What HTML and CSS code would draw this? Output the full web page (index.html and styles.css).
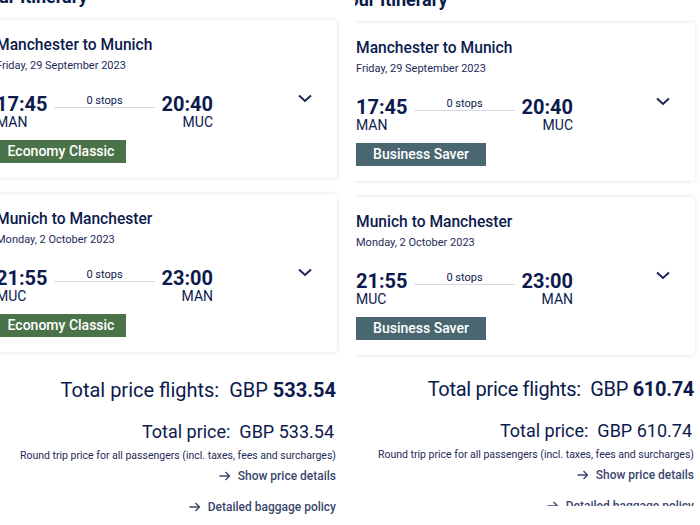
FILE: index.html
```html
<!DOCTYPE html>
<html lang="en">
<head>
<meta charset="utf-8">
<title>Itinerary comparison</title>
<link rel="stylesheet" href="styles.css">
</head>
<body>
<div class="wrap">
  <section class="panel panel-left">
    <div class="sheet">
      <h2 class="heading">Your Itinerary</h2>
      <div class="card">
        <div class="route">Manchester to Munich</div>
        <div class="date">Friday, 29 September 2023</div>
        <div class="row">
          <div class="leg">
            <div class="end">
              <div class="time">17:45</div>
              <div class="code">MAN</div>
            </div>
            <div class="mid"><div class="stops">0 stops</div><div class="line"></div></div>
            <div class="end end-right">
              <div class="time">20:40</div>
              <div class="code">MUC</div>
            </div>
          </div>
          <svg class="chev" width="14" height="9" viewBox="0 0 14 9"><path d="M1 1.5 L7 7 L13 1.5" fill="none" stroke="#1a2656" stroke-width="2"/></svg>
        </div>
        <div class="badge badge-eco">Economy Classic</div>
      </div>
      <div class="card card-second">
        <div class="route">Munich to Manchester</div>
        <div class="date">Monday, 2 October 2023</div>
        <div class="row">
          <div class="leg">
            <div class="end">
              <div class="time">21:55</div>
              <div class="code">MUC</div>
            </div>
            <div class="mid"><div class="stops">0 stops</div><div class="line"></div></div>
            <div class="end end-right">
              <div class="time">23:00</div>
              <div class="code">MAN</div>
            </div>
          </div>
          <svg class="chev" width="14" height="9" viewBox="0 0 14 9"><path d="M1 1.5 L7 7 L13 1.5" fill="none" stroke="#1a2656" stroke-width="2"/></svg>
        </div>
        <div class="badge badge-eco">Economy Classic</div>
      </div>
      <div class="totals">
        <div class="t-flights">Total price flights:&nbsp; GBP <b>533.54</b></div>
        <div class="t-price">Total price:&nbsp; GBP 533.54</div>
        <div class="t-note">Round trip price for all passengers (incl. taxes, fees and surcharges)</div>
        <div class="t-link"><svg class="arrow" width="12" height="10" viewBox="0 0 12 10"><path d="M0.5 5 H10.5 M6.5 1 L10.5 5 L6.5 9" fill="none" stroke="#3b476c" stroke-width="1.4"/></svg>Show price details</div>
        <div class="t-link t-bag"><svg class="arrow" width="12" height="10" viewBox="0 0 12 10"><path d="M0.5 5 H10.5 M6.5 1 L10.5 5 L6.5 9" fill="none" stroke="#3b476c" stroke-width="1.4"/></svg>Detailed baggage policy</div>
      </div>
    </div>
  </section>
  <section class="panel panel-right">
    <div class="sheet">
      <h2 class="heading">Your Itinerary</h2>
      <div class="card">
        <div class="route">Manchester to Munich</div>
        <div class="date">Friday, 29 September 2023</div>
        <div class="row">
          <div class="leg">
            <div class="end">
              <div class="time">17:45</div>
              <div class="code">MAN</div>
            </div>
            <div class="mid"><div class="stops">0 stops</div><div class="line"></div></div>
            <div class="end end-right">
              <div class="time">20:40</div>
              <div class="code">MUC</div>
            </div>
          </div>
          <svg class="chev" width="14" height="9" viewBox="0 0 14 9"><path d="M1 1.5 L7 7 L13 1.5" fill="none" stroke="#1a2656" stroke-width="2"/></svg>
        </div>
        <div class="badge badge-biz">Business Saver</div>
      </div>
      <div class="card card-second">
        <div class="route">Munich to Manchester</div>
        <div class="date">Monday, 2 October 2023</div>
        <div class="row">
          <div class="leg">
            <div class="end">
              <div class="time">21:55</div>
              <div class="code">MUC</div>
            </div>
            <div class="mid"><div class="stops">0 stops</div><div class="line"></div></div>
            <div class="end end-right">
              <div class="time">23:00</div>
              <div class="code">MAN</div>
            </div>
          </div>
          <svg class="chev" width="14" height="9" viewBox="0 0 14 9"><path d="M1 1.5 L7 7 L13 1.5" fill="none" stroke="#1a2656" stroke-width="2"/></svg>
        </div>
        <div class="badge badge-biz">Business Saver</div>
      </div>
      <div class="totals">
        <div class="t-flights">Total price flights:&nbsp; GBP <b>610.74</b></div>
        <div class="t-price">Total price:&nbsp; GBP 610.74</div>
        <div class="t-note">Round trip price for all passengers (incl. taxes, fees and surcharges)</div>
        <div class="t-link"><svg class="arrow" width="12" height="10" viewBox="0 0 12 10"><path d="M0.5 5 H10.5 M6.5 1 L10.5 5 L6.5 9" fill="none" stroke="#3b476c" stroke-width="1.4"/></svg>Show price details</div>
        <div class="t-link t-bag"><svg class="arrow" width="12" height="10" viewBox="0 0 12 10"><path d="M0.5 5 H10.5 M6.5 1 L10.5 5 L6.5 9" fill="none" stroke="#3b476c" stroke-width="1.4"/></svg>Detailed baggage policy</div>
      </div>
    </div>
  </section>
</div>
</body>
</html>
```

FILE: styles.css
```css
html, body {
  margin: 0;
  padding: 0;
  background: #ffffff;
}
body {
  width: 700px;
  height: 525px;
  overflow: hidden;
  font-family: Roboto, "Liberation Sans", sans-serif;
  color: #0c1a4d;
}
.wrap {
  display: flex;
  align-items: flex-start;
}
.panel {
  overflow: hidden;
  flex: none;
}
.panel-left {
  width: 348px;
  height: 525px;
}
.panel-right {
  width: 345px;
  height: 506px;
  margin-left: 7px;
}
.sheet {
  width: 357px;
  margin-left: -20px;
  margin-top: -15px;
}
.panel-right .sheet {
  width: 355px;
  margin-left: -15px;
  margin-top: -12px;
}
.heading {
  margin: 0 0 11px -2px;
  font-size: 18px;
  line-height: 24px;
  font-weight: 700;
  color: #0c1a4d;
}
.card {
  box-sizing: border-box;
  background: #fff;
  box-shadow: 0 0 4px rgba(0, 0, 0, 0.13);
  border-radius: 3px;
  padding: 15px 25px 15px 16px;
}
.card-second {
  margin-top: 16px;
}
.route {
  font-size: 15.6px;
  line-height: 20px;
  font-weight: 500;
}
.date {
  margin-top: 3px;
  font-size: 11px;
  line-height: 16px;
  color: #1e2a5a;
}
.row {
  margin-top: 19px;
  display: flex;
  align-items: flex-start;
  justify-content: space-between;
}
.leg {
  width: 217px;
  display: flex;
  align-items: flex-start;
}
.end {
  flex: none;
}
.end-right {
  text-align: right;
}
.time {
  font-size: 20px;
  line-height: 22px;
  font-weight: 700;
}
.code {
  font-size: 14px;
  line-height: 15px;
}
.mid {
  flex: 1;
  margin: 2px 6px 0;
  text-align: center;
}
.stops {
  font-size: 11px;
  line-height: 12px;
}
.line {
  height: 1px;
  background: #d6d8de;
}
.chev {
  display: block;
  margin-top: 1px;
}
.badge {
  margin-top: 10px;
  width: 130px;
  height: 23px;
  line-height: 23px;
  text-align: center;
  color: #fff;
  font-size: 14px;
  font-weight: 500;
}
.badge-eco {
  background: #4b7349;
}
.badge-biz {
  background: #4a6771;
}
.totals {
  text-align: right;
  padding-right: 1px;
}
.t-flights {
  margin-top: 26px;
  font-size: 20px;
  line-height: 24px;
}
.t-flights b {
  font-weight: 700;
}
.panel-right .t-flights {
  margin-top: 22px;
  letter-spacing: -0.3px;
}
.t-price {
  margin-top: 19px;
  padding-right: 2px;
  font-size: 18px;
  line-height: 22px;
}
.t-note {
  margin-top: 6px;
  font-size: 10.5px;
  line-height: 14px;
  color: #1e2a5a;
}
.t-link {
  margin-top: 5px;
  font-size: 12px;
  line-height: 16px;
  color: #3b476c;
  font-weight: 500;
}
.t-bag {
  margin-top: 15px;
}
.arrow {
  margin-right: 7px;
  vertical-align: -1px;
}
```
